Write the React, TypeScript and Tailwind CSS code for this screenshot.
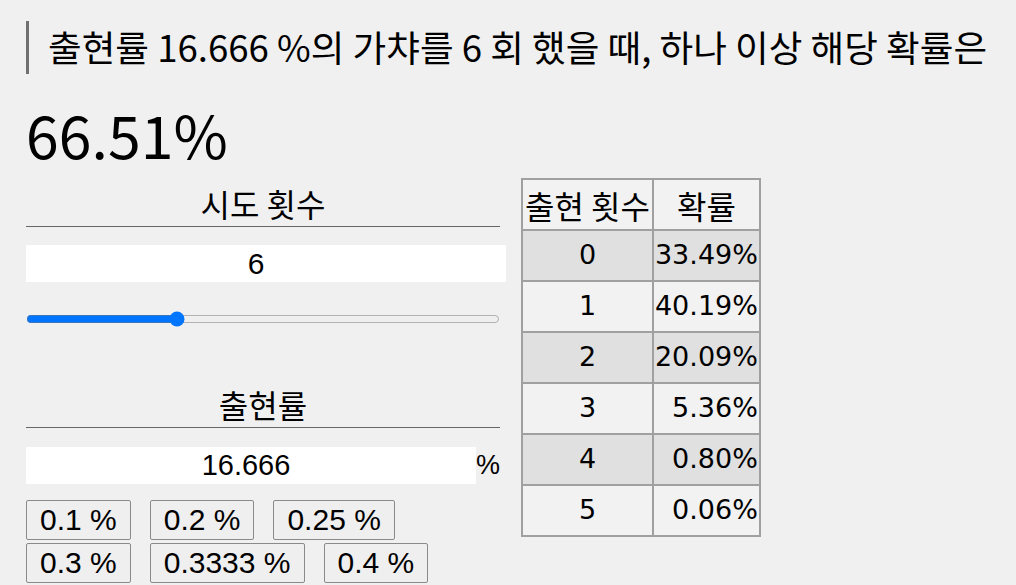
import React from 'react';

const rows = [
  { n: 0, p: '33.49%' },
  { n: 1, p: '40.19%' },
  { n: 2, p: '20.09%' },
  { n: 3, p: '5.36%' },
  { n: 4, p: '0.80%' },
  { n: 5, p: '0.06%' },
];

const presets = [
  ['0.1 %', '0.2 %', '0.25 %'],
  ['0.3 %', '0.3333 %', '0.4 %'],
];

const kr = { fontFamily: '"Noto Sans CJK KR", "Noto Sans", sans-serif' };
const arial = { fontFamily: '"Liberation Sans", Arial, sans-serif' };
const verdana = { fontFamily: '"DejaVu Sans", "Noto Sans CJK KR", sans-serif' };

export default function App() {
  const [tries, setTries] = React.useState(6);
  const [rate, setRate] = React.useState('16.666');

  return (
    <div className="min-h-[585px] w-[1016px] bg-[#f0f0f0] pl-[26px] pt-[21px] text-black" style={kr}>
      {/* question */}
      <div className="flex h-[53px] items-center border-l-[3px] border-[#707070] pl-[19px] text-[36.6px] leading-none">
        출현률 {rate} %의 가챠를 {tries} 회 했을 때, 하나 이상 해당 확률은
      </div>

      <div className="mt-[30px] text-[59px] leading-none">66.51%</div>

      <div className="mt-[15px] flex gap-[15px]">
        {/* controls */}
        <div className="w-[480px] pt-[6px]">
          <div className="w-[474px] border-b border-[#666] pb-[4px] text-center text-[32px] leading-[38px]">
            시도 횟수
          </div>
          <input
            value={tries}
            onChange={(e) => setTries(Number(e.target.value) || 0)}
            className="mt-[18px] h-[37px] w-[480px] bg-white pr-[20px] text-center text-[30px] outline-none"
            style={arial}
          />
          <input
            type="range"
            min={1}
            max={17}
            value={tries}
            onChange={(e) => setTries(Number(e.target.value))}
            className="mt-[27px] block h-[20px] w-[474px] accent-[#0075ff]"
          />

          <div className="mt-[56px] w-[474px] border-b border-[#666] pb-[4px] text-center text-[32px] leading-[38px]">
            출현률
          </div>
          <div className="mt-[17px] flex items-center" style={arial}>
            <input
              value={rate}
              onChange={(e) => setRate(e.target.value)}
              className="h-[37px] w-[450px] bg-white pr-[10px] text-center text-[29px] outline-none"
            />
            <span className="text-[27px]">%</span>
          </div>
          <div className="mt-[14px] flex flex-col gap-[3px]" style={arial}>
            {presets.map((row, i) => (
              <div key={i} className="flex gap-[19px]">
                {row.map((b) => (
                  <button
                    key={b}
                    onClick={() => setRate(b.replace(' %', ''))}
                    className="h-[40px] rounded-[2px] border border-[#8a8a8a] bg-[#efefef] px-[13px] text-[30px] leading-none"
                  >
                    {b}
                  </button>
                ))}
              </div>
            ))}
          </div>
        </div>

        {/* distribution table */}
        <table className="h-fit border-collapse border-2 border-[#a0a0a0] text-[27px]" style={verdana}>
          <thead>
            <tr className="bg-[#f2f2f2]">
              <th className="h-[51px] border-2 border-[#a0a0a0] px-[2px] text-[32px] font-normal" style={kr}>출현 횟수</th>
              <th className="h-[51px] border-2 border-[#a0a0a0] px-[2px] text-[32px] font-normal" style={kr}>확률</th>
            </tr>
          </thead>
          <tbody>
            {rows.map((r) => (
              <tr key={r.n} className={r.n % 2 === 0 ? 'bg-[#e0e0e0]' : 'bg-[#f2f2f2]'}>
                <td className="h-[51px] border-2 border-[#a0a0a0] text-center">{r.n}</td>
                <td className="h-[51px] border-2 border-[#a0a0a0] px-[1px] text-right">{r.p}</td>
              </tr>
            ))}
          </tbody>
        </table>
      </div>
    </div>
  );
}
